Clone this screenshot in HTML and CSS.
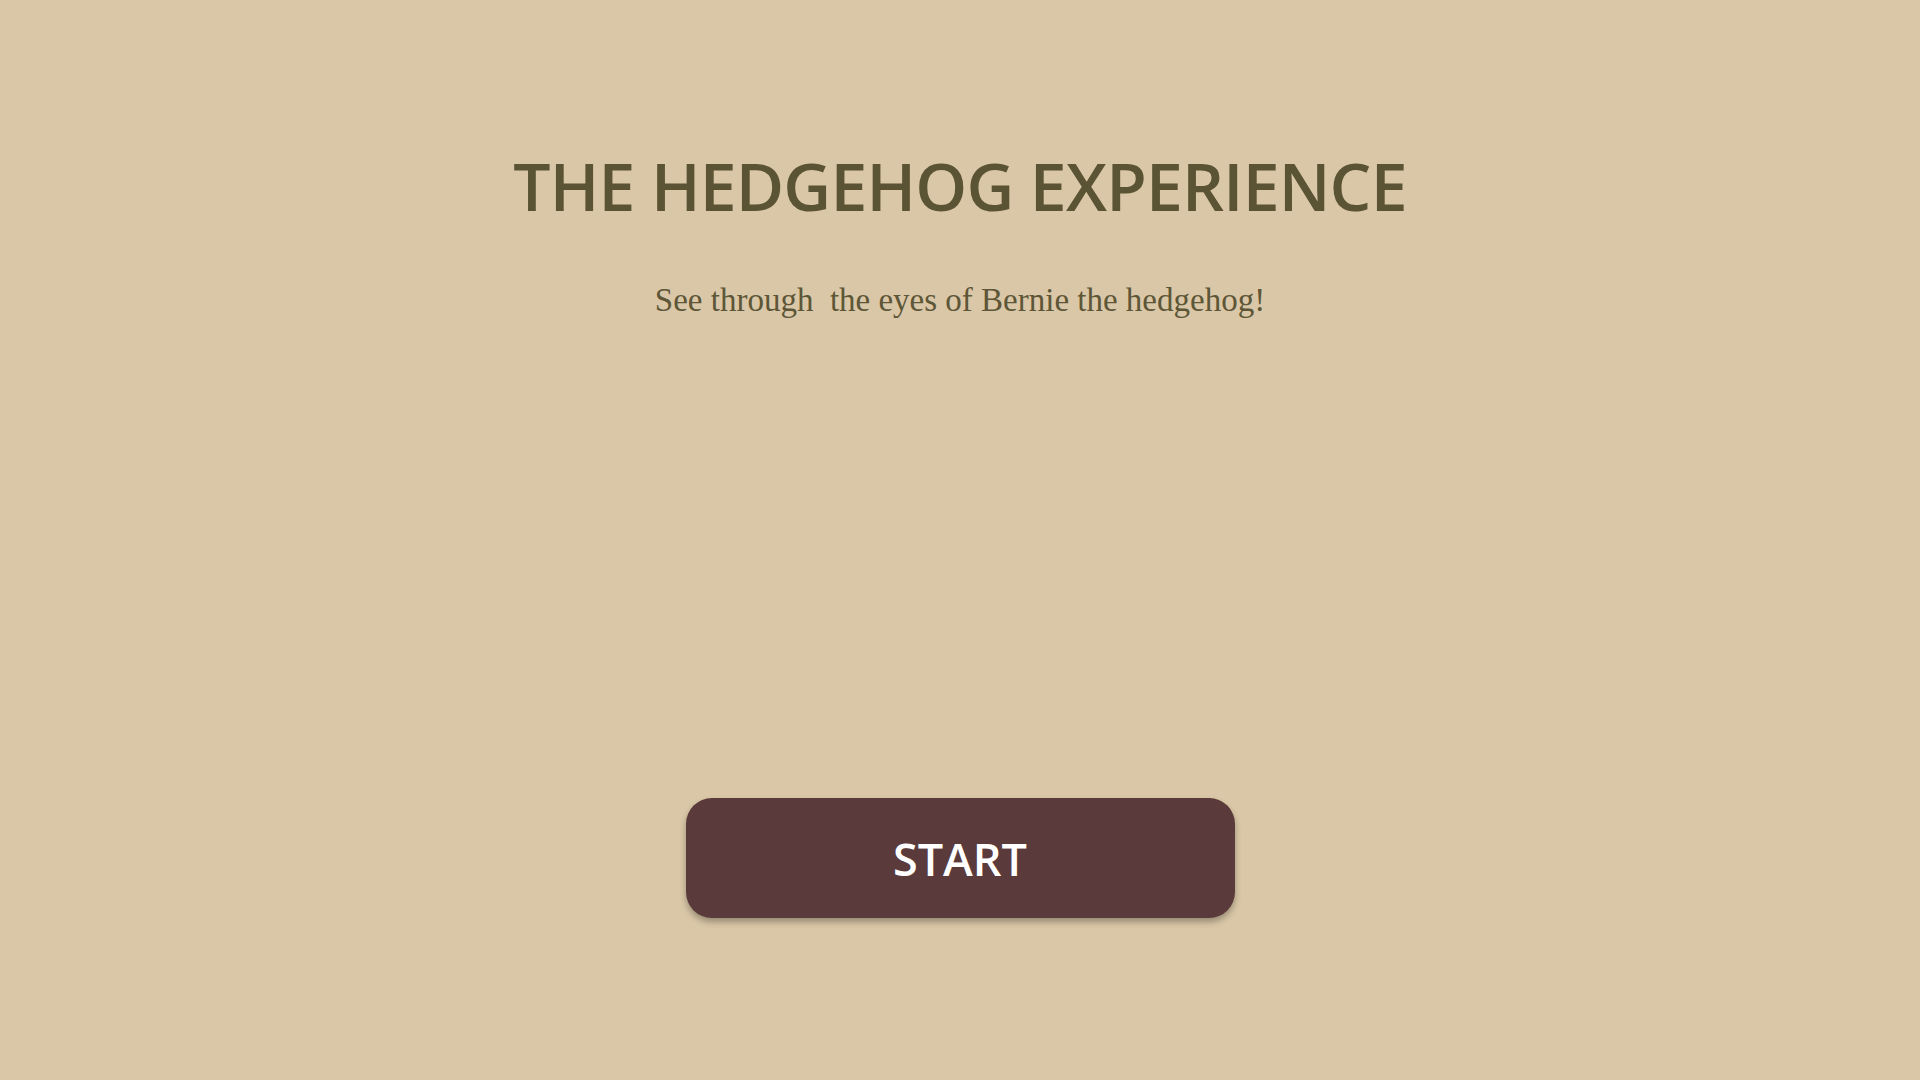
FILE: index.html
```html
<!DOCTYPE html>
<html>
<head>
<meta charset="utf-8">
<link rel="stylesheet" href="styles.css">
</head>
<body>
<main class="page">
  <h1 class="title">THE HEDGEHOG EXPERIENCE</h1>
  <p class="subtitle">See through&nbsp; the eyes of Bernie the hedgehog!</p>
  <button class="start">START</button>
</main>
</body>
</html>
```
FILE: styles.css
```css
html, body {
  margin: 0;
  padding: 0;
  background: #dac7a7;
}
.page {
  width: 1920px;
  height: 1080px;
  display: flex;
  flex-direction: column;
  align-items: center;
  box-sizing: border-box;
  padding-top: 142px;
}
.title {
  margin: 0;
  font-family: "Open Sans", "Liberation Sans", sans-serif;
  font-weight: 600;
  font-size: 66px;
  line-height: 86px;
  color: #5a5434;
  letter-spacing: -0.8px;
}
.subtitle {
  margin: 50px 0 0 0;
  font-family: "Liberation Serif", serif;
  font-size: 33px;
  line-height: 44px;
  color: #5d5637;
}
.start {
  margin-top: 476px;
  width: 549px;
  height: 120px;
  border: none;
  border-radius: 26px;
  background: #5a3a3a;
  color: #ffffff;
  font-family: "Open Sans", "Liberation Sans", sans-serif;
  font-weight: 600;
  font-size: 45px;
  box-shadow: 0 4px 6px rgba(0, 0, 0, 0.3);
  cursor: pointer;
}
```
